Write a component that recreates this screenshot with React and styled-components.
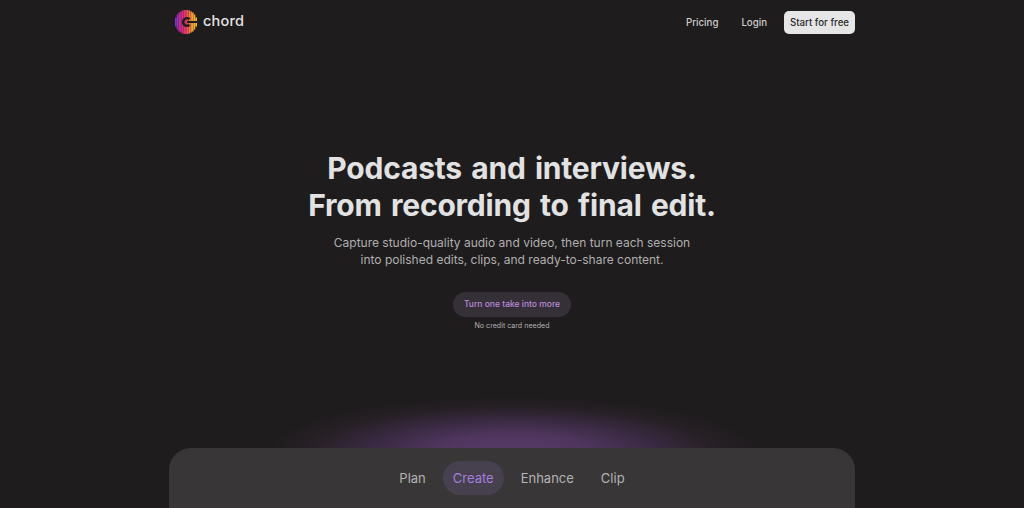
import React from 'react';
import styled, { createGlobalStyle } from 'styled-components';

const GlobalStyle = createGlobalStyle`
  html, body {
    margin: 0;
    height: 100%;
    background: #1e1c1d;
    overflow: hidden;
  }
  body {
    font-family: Inter, "Liberation Sans", sans-serif;
  }
`;

const Page = styled.div`
  position: relative;
  height: 508px;
  display: flex;
  flex-direction: column;
  align-items: center;
  overflow: hidden;
`;

const Header = styled.header`
  width: 686px;
  height: 44px;
  box-sizing: border-box;
  padding-left: 6px;
  display: flex;
  align-items: center;
  justify-content: space-between;
`;

const Brand = styled.div`
  display: flex;
  align-items: center;
  gap: 6px;
`;

const BrandName = styled.span`
  font-size: 14.5px;
  font-weight: 500;
  color: #e4e4e4;
  letter-spacing: 0.2px;
  margin-top: -3px;
`;

const Nav = styled.nav`
  display: flex;
  align-items: center;
  font-size: 9.7px;
  font-weight: 500;
`;

const NavLink = styled.a`
  color: #cfcdcd;
  margin-right: ${props => props.gap}px;
`;

const StartButton = styled.a`
  display: block;
  width: 71px;
  height: 23px;
  line-height: 23px;
  text-align: center;
  background: #e6e6e6;
  color: #2a2a2a;
  border-radius: 5px;
`;

const Hero = styled.section`
  margin-top: 106px;
  display: flex;
  flex-direction: column;
  align-items: center;
`;

const Title = styled.h1`
  margin: 0;
  font-size: 30px;
  line-height: 37px;
  font-weight: 700;
  text-align: center;
  color: #e2e2e2;
  letter-spacing: -0.2px;
  word-spacing: 2.4px;
`;

const Subtitle = styled.p`
  margin: 11px 0 0;
  font-size: 12px;
  line-height: 16.5px;
  text-align: center;
  color: #b0afaf;
`;

const Cta = styled.a`
  margin-top: 24px;
  width: 118px;
  height: 25px;
  line-height: 25px;
  border-radius: 13px;
  text-align: center;
  background: #353038;
  color: #b98ad8;
  font-size: 8.5px;
  font-weight: 500;
`;

const Note = styled.span`
  margin-top: 3px;
  font-size: 7.1px;
  line-height: 11px;
  color: #b4b3b3;
`;

const Glow = styled.div`
  position: absolute;
  left: 262px;
  top: 396px;
  width: 500px;
  height: 112px;
  background: radial-gradient(ellipse 50% 50% at 50% 50%, #553a68 0%, #50365f 30%, #3a2a43 56%, #272026 80%, rgba(30, 28, 29, 0) 100%);
`;

const Panel = styled.section`
  position: absolute;
  left: 169px;
  top: 448px;
  width: 686px;
  height: 80px;
  box-sizing: border-box;
  padding-top: 13px;
  display: flex;
  justify-content: center;
  align-items: flex-start;
  gap: 7px;
  background: #383637;
  border-radius: 22px;
`;

const Tab = styled.div`
  height: 34px;
  line-height: 34px;
  padding: 0 10px;
  border-radius: 17px;
  font-size: 13px;
  color: ${props => props.active ? '#a57fdc' : '#b4b3b3'};
  background: ${props => props.active ? '#47404e' : 'transparent'};
`;

const barHeights = [9, 15, 19, 21, 23, 24, 24, 24, 23, 21, 19, 15, 9];

const Logo = () => (
  <svg width="22" height="24" viewBox="0 0 22 24">
    <defs>
      <linearGradient id="chordGrad" gradientUnits="userSpaceOnUse" x1="0" y1="0" x2="22" y2="0">
        <stop offset="0" stopColor="#6a3cd2" />
        <stop offset="0.28" stopColor="#d9228f" />
        <stop offset="0.5" stopColor="#ee3d63" />
        <stop offset="0.75" stopColor="#f6972b" />
        <stop offset="1" stopColor="#f8c231" />
      </linearGradient>
    </defs>
    {barHeights.map((h, i) => (
      <rect
        key={i}
        x={i * 1.7}
        y={12 - h / 2}
        width="1.6"
        height={h}
        fill="url(#chordGrad)"
      />
    ))}
    <path d="M14.5 9.2 A3.8 3.8 0 1 0 14.5 14.8" fill="none" stroke="#1e1c1d" strokeWidth="2.6" />
    <rect x="12" y="11" width="10" height="2" fill="#1e1c1d" />
  </svg>
);

export default function App() {
  return (
    <Page>
      <GlobalStyle />
      <Header>
        <Brand>
          <Logo />
          <BrandName>chord</BrandName>
        </Brand>
        <Nav>
          <NavLink gap={23}>Pricing</NavLink>
          <NavLink gap={17}>Login</NavLink>
          <StartButton>Start for free</StartButton>
        </Nav>
      </Header>
      <Hero>
        <Title>
          Podcasts and interviews.
          <br />
          From recording to final edit.
        </Title>
        <Subtitle>
          Capture studio-quality audio and video, then turn each session
          <br />
          into polished edits, clips, and ready-to-share content.
        </Subtitle>
        <Cta>Turn one take into more</Cta>
        <Note>No credit card needed</Note>
      </Hero>
      <Glow />
      <Panel>
        <Tab>Plan</Tab>
        <Tab active>Create</Tab>
        <Tab>Enhance</Tab>
        <Tab>Clip</Tab>
      </Panel>
    </Page>
  );
}
